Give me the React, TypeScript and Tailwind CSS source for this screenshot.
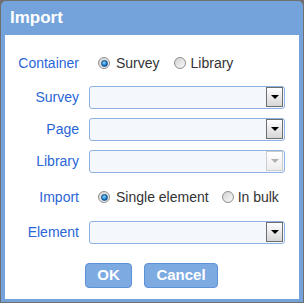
import React from "react";

function Radio({ checked }: { checked?: boolean }) {
  return (
    <span className="flex h-[12px] w-[12px] items-center justify-center rounded-full border border-[#8e8e8e] bg-gradient-to-br from-[#d2d2d2] to-[#fafafa]">
      {checked && (
        <span className="h-[7px] w-[7px] rounded-full border border-[#0b4a86] bg-[radial-gradient(circle_at_40%_35%,#8fdcff,#1a78c8_60%,#0b4a86)]" />
      )}
    </span>
  );
}

function Select({ disabled }: { disabled?: boolean }) {
  return (
    <div className="flex h-[23px] w-[196px] items-start justify-end rounded-[3px] border border-[#8fb1e2] bg-[#f4f8fd] pr-[1px]">
      <div
        className={
          disabled
            ? "flex h-[20px] w-[17px] items-center justify-center border border-[#cdcdcd] bg-gradient-to-b from-white to-[#ececec]"
            : "flex h-[20px] w-[17px] items-center justify-center border border-[#6e6e6e] bg-gradient-to-b from-white to-[#d6d6d6]"
        }
      >
        <svg width="8" height="4" viewBox="0 0 8 4">
          <path d="M0 0H8L4 4Z" fill={disabled ? "#b0b0b0" : "#000"} />
        </svg>
      </div>
    </div>
  );
}

function Label({ children }: { children: React.ReactNode }) {
  return <span className="w-[74px] shrink-0 text-right text-[#2a66d8]">{children}</span>;
}

export default function App() {
  return (
    <div
      className="h-[303px] w-[304px] bg-[#6f6f6f] pt-px pl-px"
      style={{ fontFamily: '"Liberation Sans", Arial, sans-serif' }}
    >
      <div className="flex h-[301px] w-[302px] flex-col rounded-t-[5px] bg-[#73a3da] px-[4px] pb-[3px]">
        <div className="flex h-[34px] items-center pl-[5px] text-[17px] font-bold text-white">
          Import
        </div>
        <div className="flex flex-1 flex-col bg-white pt-[16px] text-[14px] text-[#333]">
          <div className="flex h-[24px] items-center gap-[10px]">
            <Label>Container</Label>
            <div className="ml-[9px] flex items-center">
              <Radio checked />
              <span className="ml-[6px]">Survey</span>
              <span className="ml-[14px]">
                <Radio />
              </span>
              <span className="ml-[5px]">Library</span>
            </div>
          </div>
          <div className="mt-[11px] flex items-center gap-[10px]">
            <Label>Survey</Label>
            <Select />
          </div>
          <div className="mt-[9px] flex items-center gap-[10px]">
            <Label>Page</Label>
            <Select />
          </div>
          <div className="mt-[9px] flex items-center gap-[10px]">
            <Label>Library</Label>
            <Select disabled />
          </div>
          <div className="mt-[12px] flex h-[24px] items-center gap-[10px]">
            <Label>Import</Label>
            <div className="ml-[9px] flex items-center">
              <Radio checked />
              <span className="ml-[6px]">Single element</span>
              <span className="ml-[13px]">
                <Radio />
              </span>
              <span className="ml-[4px]">In bulk</span>
            </div>
          </div>
          <div className="mt-[12px] flex items-center gap-[10px]">
            <Label>Element</Label>
            <Select />
          </div>
          <div className="mt-[19px] flex justify-center gap-[12px] pr-[1px]">
            <button className="h-[25px] w-[47px] rounded-[4px] border border-[#5e92d8] bg-[#7eaae2] text-[15px] font-bold text-white">
              OK
            </button>
            <button className="h-[25px] w-[74px] rounded-[4px] border border-[#5e92d8] bg-[#7eaae2] text-[15px] font-bold text-white">
              Cancel
            </button>
          </div>
        </div>
      </div>
    </div>
  );
}
